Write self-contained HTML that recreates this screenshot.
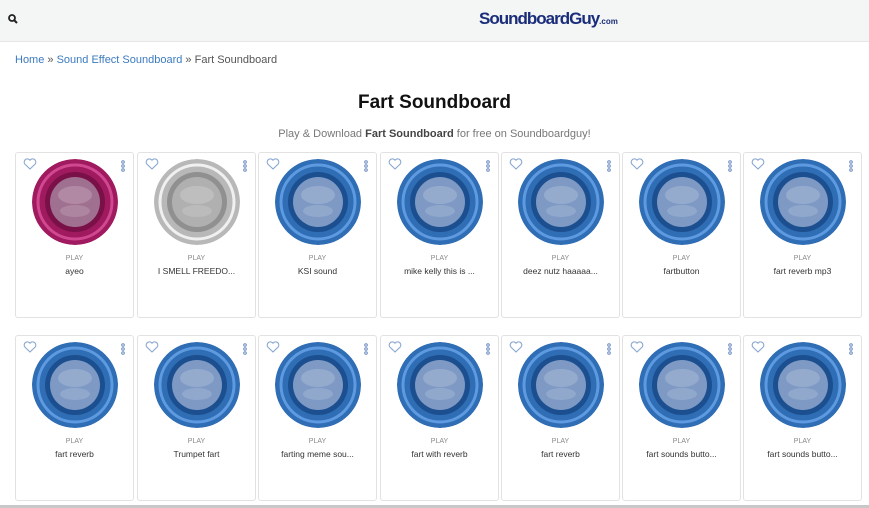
<!DOCTYPE html><html><head><style>
body{margin:0;width:869px;height:508px;overflow:hidden;background:#fff;font-family:"Liberation Sans",sans-serif;position:relative}
.top{height:41px;background:#f4f5f5;border-bottom:1px solid #e6e6e6;position:relative}
.logo{position:absolute;left:479px;top:9px;font-weight:bold;font-size:17px;color:#1a2d7a;letter-spacing:-1px;font-family:"Liberation Sans",sans-serif}
.logo small{font-size:8px;letter-spacing:0}
.bc{position:absolute;left:15px;top:54px;font-size:11px;color:#555}
.bc a{color:#3b7bbf;text-decoration:none}
h1{position:absolute;top:92px;left:0;width:869px;text-align:center;margin:0;font-size:19px;color:#111}
.sub{position:absolute;top:128px;width:869px;text-align:center;font-size:11px;color:#777}
.sub b{color:#444}
.card{position:absolute;width:117px;height:164px;border:1px solid #e2e2e2;border-radius:3px;background:#fff}
.btn{position:absolute;left:16px;top:6px;width:86px;height:86px;border-radius:50%}
.play{position:absolute;top:102px;width:100%;text-align:center;font-size:7px;color:#888}
.nm{position:absolute;top:113px;width:100%;text-align:center;font-size:8.5px;color:#333}
.ht{position:absolute;left:7px;top:5px}
.dt{position:absolute;right:8px;top:7px}
.bot{position:absolute;left:0;top:505px;width:869px;height:3px;background:#c8c8c8}
</style></head><body>
<div class="top">
<svg style="position:absolute;left:8px;top:14px" width="10" height="10" viewBox="0 0 10 10"><circle cx="4" cy="4" r="3" fill="none" stroke="#222" stroke-width="1.8"/><line x1="6" y1="6" x2="9" y2="9" stroke="#222" stroke-width="2"/></svg>
<div class="logo">SoundboardGuy<small>.com</small></div>
</div>
<div class="bc"><a>Home</a> » <a>Sound Effect Soundboard</a> » Fart Soundboard</div>
<h1>Fart Soundboard</h1>
<div class="sub">Play &amp; Download <b>Fart Soundboard</b> for free on Soundboardguy!</div>
<div id="g"></div>
<div class="bot"></div>
<script>
var names=[["ayeo","I SMELL FREEDO...","KSI sound","mike kelly this is ...","deez nutz haaaaa...","fartbutton","fart reverb mp3"],["fart reverb","Trumpet fart","farting meme sou...","fart with reverb","fart reverb","fart sounds butto...","fart sounds butto..."]];
var xs=[15,137,258,380,501,622,743],ys=[152,335],h='';
function col(r,c){if(r==0&&c==0)return['#a01a60','#d04890','#7a1048','#a07090'];if(r==0&&c==1)return['#b8b8b8','#f0f0f0','#909090','#b0b0b0'];return['#2f6db5','#5e9ae0','#1c4f8f','#7d99c4'];}
for(var r=0;r<2;r++)for(var c=0;c<7;c++){var k=col(r,c);
h+='<div class="card" style="left:'+xs[c]+'px;top:'+ys[r]+'px">'+
'<svg class="ht" width="14" height="12" viewBox="0 0 14 12"><path d="M7 11 L1.8 6 A3 3 0 0 1 7 2.2 A3 3 0 0 1 12.2 6 Z" fill="none" stroke="#8aa8d0" stroke-width="1.1"/></svg>'+
'<svg class="dt" width="4" height="12" viewBox="0 0 4 12"><circle cx="2" cy="2" r="1.3" fill="none" stroke="#6a8ac0"/><circle cx="2" cy="6" r="1.3" fill="none" stroke="#6a8ac0"/><circle cx="2" cy="10" r="1.3" fill="none" stroke="#6a8ac0"/></svg>'+
'<svg class="btn" viewBox="0 0 86 86"><circle cx="43" cy="43" r="43" fill="'+k[0]+'"/><circle cx="43" cy="43" r="37" fill="none" stroke="'+k[1]+'" stroke-width="3"/><circle cx="43" cy="43" r="30" fill="'+k[2]+'"/><circle cx="43" cy="43" r="25" fill="'+k[3]+'"/><ellipse cx="43" cy="36" rx="17" ry="9" fill="#fff" opacity=".18"/><ellipse cx="43" cy="52" rx="15" ry="6" fill="#fff" opacity=".15"/></svg>'+
'<div class="play">PLAY</div><div class="nm">'+names[r][c]+'</div></div>';}
document.getElementById('g').innerHTML=h;
</script>
</body></html>
